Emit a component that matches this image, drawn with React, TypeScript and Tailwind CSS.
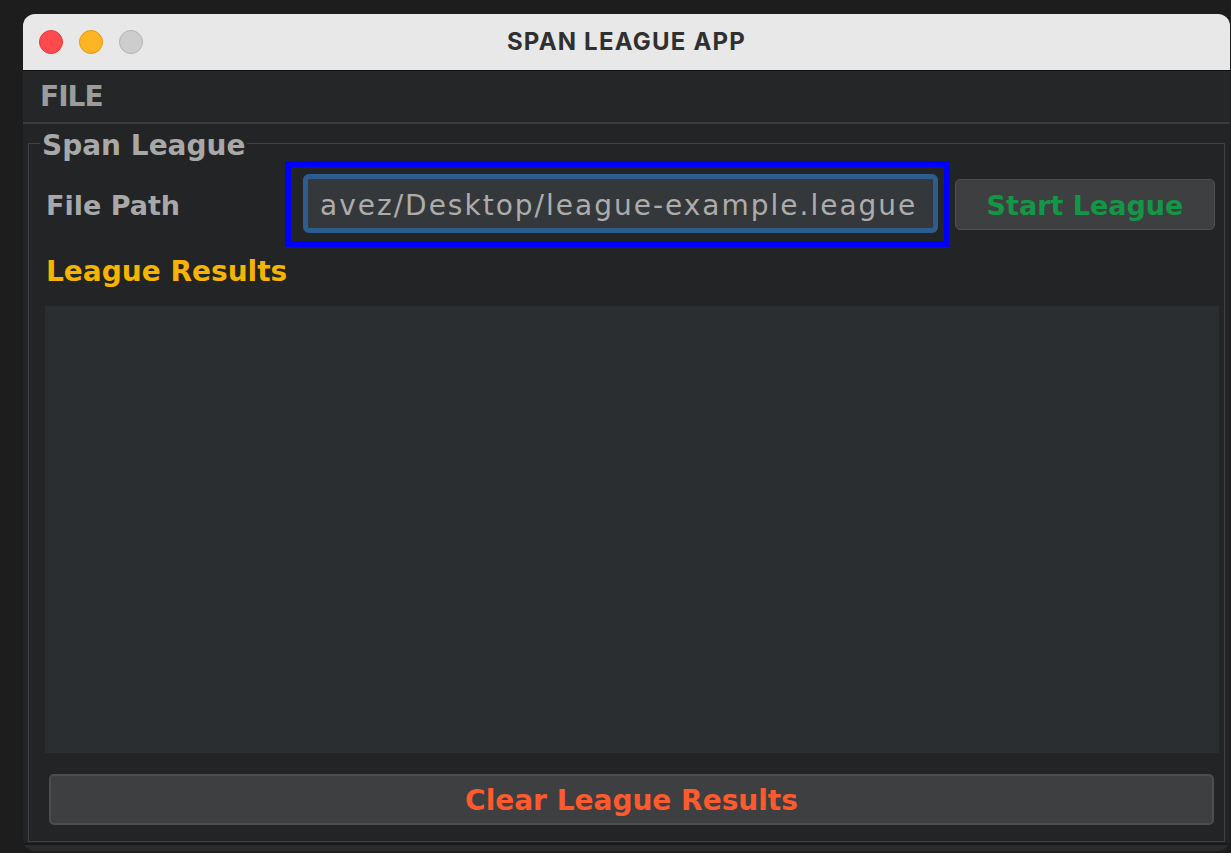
import React from "react";

const App = () => {
  return (
    <div className="w-[1231px] h-[853px] bg-[#1d1d1d] pl-[23px] pt-[14px] overflow-hidden">
      <div className="w-[1207px] h-[837px] flex flex-col rounded-[12px] overflow-hidden bg-[#232426]">
        {/* title bar */}
        <div className="h-[57px] shrink-0 grid grid-cols-[1fr_auto_1fr] items-center bg-[#e8e8e8] border-b border-[#111111]">
          <div className="flex items-center gap-[16px] pl-[16px]">
            <span className="w-[24px] h-[24px] rounded-full bg-[#ff4b4e] border border-[#e0393c]" />
            <span className="w-[24px] h-[24px] rounded-full bg-[#ffb424] border border-[#e09b12]" />
            <span className="w-[24px] h-[24px] rounded-full bg-[#cdcdcd] border border-[#b3b3b3]" />
          </div>
          <div className="font-['Inter',sans-serif] font-bold text-[24px] text-[#303030] tracking-[1.2px]">
            SPAN LEAGUE APP
          </div>
          <div />
        </div>

        {/* menu bar */}
        <div className="h-[53px] shrink-0 flex items-center pl-[17px] bg-[#252628] border-b-2 border-[#3b3c3e]">
          <span className="font-['DejaVu_Sans',sans-serif] font-bold text-[28px] leading-none text-[#9c9c9c] tracking-[-1px]">
            FILE
          </span>
        </div>

        {/* content */}
        <div className="flex-1 px-[5px] pt-[2px] pb-[1px] font-['DejaVu_Sans',sans-serif]">
          <fieldset className="border border-[#414245] pl-[16px] pr-[5px] pb-[16px]">
            <legend className="-ml-[5px] px-[2px] h-[34px] leading-[39px] text-[28px] font-bold text-[#a8a8a8]">
              Span League
            </legend>

            <div className="flex items-center pt-[1px]">
              <div className="w-[240px] pl-[1px] pt-[4px] text-[27px] font-bold text-[#a8a8a8]">File Path</div>
              <div className="w-[665px] h-[86px] border-[6px] border-[#0000ff] pl-[12px] pr-[6px] pt-[7px] pb-[8px]">
                <div className="h-full flex items-center overflow-hidden rounded-[6px] border-[5px] border-[#2d5c8e] bg-[#35383b] pl-[12px] pt-[4px]">
                  <span className="whitespace-nowrap text-[28px] text-[#acacac] tracking-[2px]">
                    avez/Desktop/league-example.league
                  </span>
                </div>
              </div>
              <button className="ml-[5px] w-[260px] h-[51px] pt-[4px] rounded-[5px] bg-[#3e3f41] border border-[#4e4f51] text-[27px] font-bold text-[#149647]">
                Start League
              </button>
            </div>

            <div className="mt-[6px] h-[34px] leading-[38px] pl-[1px] text-[28px] font-bold text-[#f5b400]">
              League Results
            </div>

            <div className="mt-[19px] h-[447px] bg-[#2b2e31]" />

            <button className="mt-[21px] ml-[4px] w-[1165px] h-[51px] pt-[3px] rounded-[5px] bg-[#3e3f41] border-2 border-[#4c4d50] text-[28px] font-bold text-[#ff5a2d]">
              Clear League Results
            </button>
          </fieldset>
        </div>

        {/* bottom frame */}
        <div className="h-[8px] shrink-0 border-t-2 border-[#1a1a1a] bg-[#2a2b2d]" />
      </div>
    </div>
  );
};

export default App;
